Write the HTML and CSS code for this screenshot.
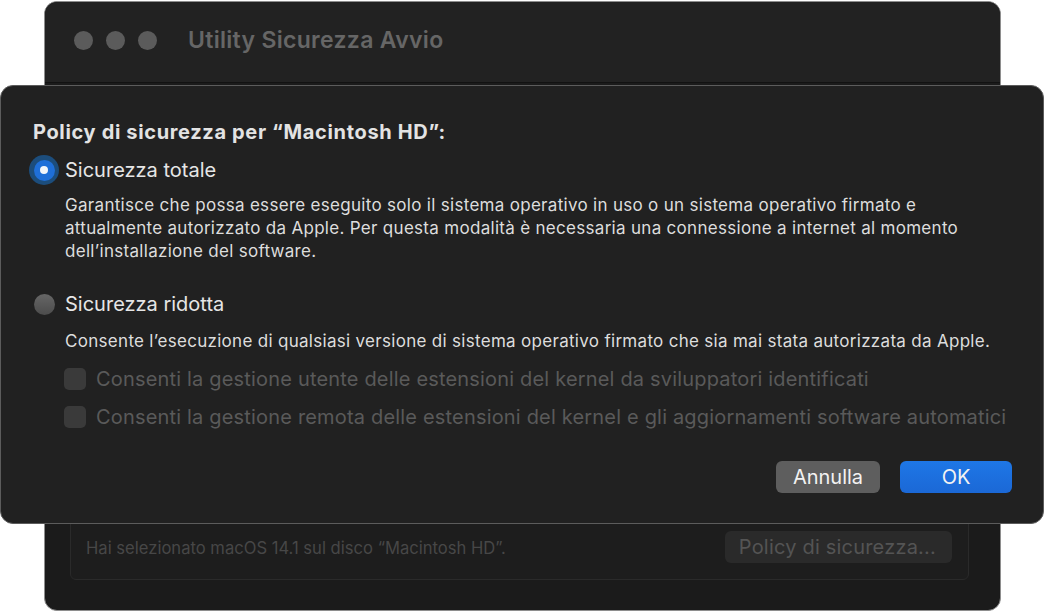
FILE: index.html
```html
<!DOCTYPE html>
<html lang="it">
<head>
<meta charset="utf-8">
<title>Utility Sicurezza Avvio</title>
<link rel="stylesheet" href="styles.css">
</head>
<body>
<div class="window">
  <div class="titlebar">
    <div class="lights"><span class="light"></span><span class="light"></span><span class="light"></span></div>
    <div class="wtitle">Utility Sicurezza Avvio</div>
  </div>
  <div class="wbody">
    <div class="group">
      <div class="gtext">Hai selezionato macOS 14.1 sul disco “Macintosh HD”.</div>
      <div class="gbtn">Policy di sicurezza...</div>
    </div>
  </div>
</div>

<div class="sheet">
  <div class="heading">Policy di sicurezza per “Macintosh HD”:</div>
  <div class="option">
    <div class="radio-row">
      <span class="radio on"><span class="dot"></span></span>
      <span class="rlabel">Sicurezza totale</span>
    </div>
    <p class="desc">Garantisce che possa essere eseguito solo il sistema operativo in uso o un sistema operativo firmato e<br>attualmente autorizzato da Apple. Per questa modalità è necessaria una connessione a internet al momento<br>dell’installazione del software.</p>
  </div>
  <div class="option second">
    <div class="radio-row">
      <span class="radio off"></span>
      <span class="rlabel">Sicurezza ridotta</span>
    </div>
    <p class="desc">Consente l’esecuzione di qualsiasi versione di sistema operativo firmato che sia mai stata autorizzata da Apple.</p>
    <div class="check-row"><span class="check"></span><span class="clabel">Consenti la gestione utente delle estensioni del kernel da sviluppatori identificati</span></div>
    <div class="check-row"><span class="check"></span><span class="clabel">Consenti la gestione remota delle estensioni del kernel e gli aggiornamenti software automatici</span></div>
  </div>
  <div class="actions">
    <div class="btn cancel">Annulla</div>
    <div class="btn ok">OK</div>
  </div>
</div>
</body>
</html>
```

FILE: styles.css
```css
* { box-sizing: border-box; }
html, body { margin: 0; padding: 0; }
body {
  width: 1045px;
  height: 612px;
  background: #ffffff;
  position: relative;
  overflow: hidden;
  font-family: Inter, "Noto Sans", "Liberation Sans", sans-serif;
  -webkit-font-smoothing: antialiased;
}

.window {
  position: absolute;
  left: 44px;
  top: 1px;
  width: 957px;
  height: 610px;
  border: 1px solid #8e8e8e;
  border-radius: 13px;
  background: #1b1b1b;
  overflow: hidden;
  display: flex;
  flex-direction: column;
}
.titlebar {
  height: 81px;
  background: #222222;
  border-bottom: 1px solid #121212;
  display: flex;
  align-items: center;
  padding-left: 29px;
  padding-bottom: 4px;
  gap: 31px;
}
.lights { display: flex; gap: 13px; }
.light {
  width: 19px;
  height: 19px;
  border-radius: 50%;
  background: #5b5b5b;
}
.wtitle {
  color: #666666;
  font-size: 23px;
  font-weight: 600;
  letter-spacing: 0.3px;
}
.wbody {
  flex: 1;
  padding: 0 31px 30px 25px;
  display: flex;
  flex-direction: column;
  justify-content: flex-end;
}
.group {
  height: 120px;
  border: 1px solid #2a2a2a;
  border-radius: 6px;
  background: #1d1d1d;
  display: flex;
  align-items: flex-end;
  justify-content: space-between;
  padding: 0 16px 16px 15px;
}
.gtext {
  color: #474747;
  font-size: 16.6px;
  padding-bottom: 5px;
}
.gbtn {
  color: #545454;
  background: #2a2a2a;
  border-radius: 6px;
  font-size: 20px;
  letter-spacing: 0.2px;
  height: 32px;
  line-height: 32px;
  padding: 0 16px 0 14px;
}

.sheet {
  position: absolute;
  left: 0;
  top: 85px;
  width: 1044px;
  height: 439px;
  background: #212121;
  border: 1px solid #5c5c5c;
  border-radius: 13px;
  padding: 34px 0 0 32px;
  display: flex;
  flex-direction: column;
  color: #e2e2e2;
}
.heading {
  font-size: 20px;
  font-weight: 700;
  color: #e3e3e3;
  line-height: 24px;
  letter-spacing: 0.65px;
}
.option { display: flex; flex-direction: column; }
.radio-row {
  display: flex;
  align-items: center;
  height: 30px;
  margin-top: 11px;
}
.radio {
  width: 30px;
  height: 30px;
  border-radius: 50%;
  display: flex;
  align-items: center;
  justify-content: center;
  margin-left: -4px;
  margin-right: 6px;
}
.radio.on {
  background: #1c4d7c;
}
.radio.on .dot {
  width: 21px;
  height: 21px;
  border-radius: 50%;
  background: #1f6fd8;
  display: flex;
  align-items: center;
  justify-content: center;
}
.radio.on .dot::after {
  content: "";
  width: 8px;
  height: 8px;
  border-radius: 50%;
  background: #f4f6fa;
}
.radio.off::after {
  content: "";
  width: 21px;
  height: 21px;
  border-radius: 50%;
  background: linear-gradient(#666666, #4c4c4c);
}
.rlabel {
  font-size: 20px;
  color: #e6e6e6;
}
.desc {
  margin: 9px 0 0 32px;
  font-size: 17px;
  line-height: 23px;
  letter-spacing: 0.3px;
  color: #dddddd;
}
.second { margin-top: 15px; }
.second .desc { margin-top: 11px; }
.check-row {
  display: flex;
  align-items: center;
  margin-left: 31px;
  height: 22px;
  margin-top: 15px;
  gap: 10px;
}
.check-row + .check-row { margin-top: 16px; }
.check {
  width: 22px;
  height: 22px;
  border-radius: 5px;
  background: #3a3a3a;
}
.clabel {
  font-size: 20px;
  letter-spacing: 0.18px;
  color: #5a5a5a;
}
.actions {
  display: flex;
  justify-content: flex-end;
  gap: 20px;
  padding-right: 31px;
  margin-top: 33px;
}
.btn {
  height: 32px;
  line-height: 32px;
  border-radius: 6px;
  font-size: 20px;
  text-align: center;
  color: #f2f2f2;
}
.btn.cancel {
  width: 104px;
  background: #5e5e5e;
}
.btn.ok {
  width: 112px;
  background: linear-gradient(#1e77e6, #1b68d6);
}
```
